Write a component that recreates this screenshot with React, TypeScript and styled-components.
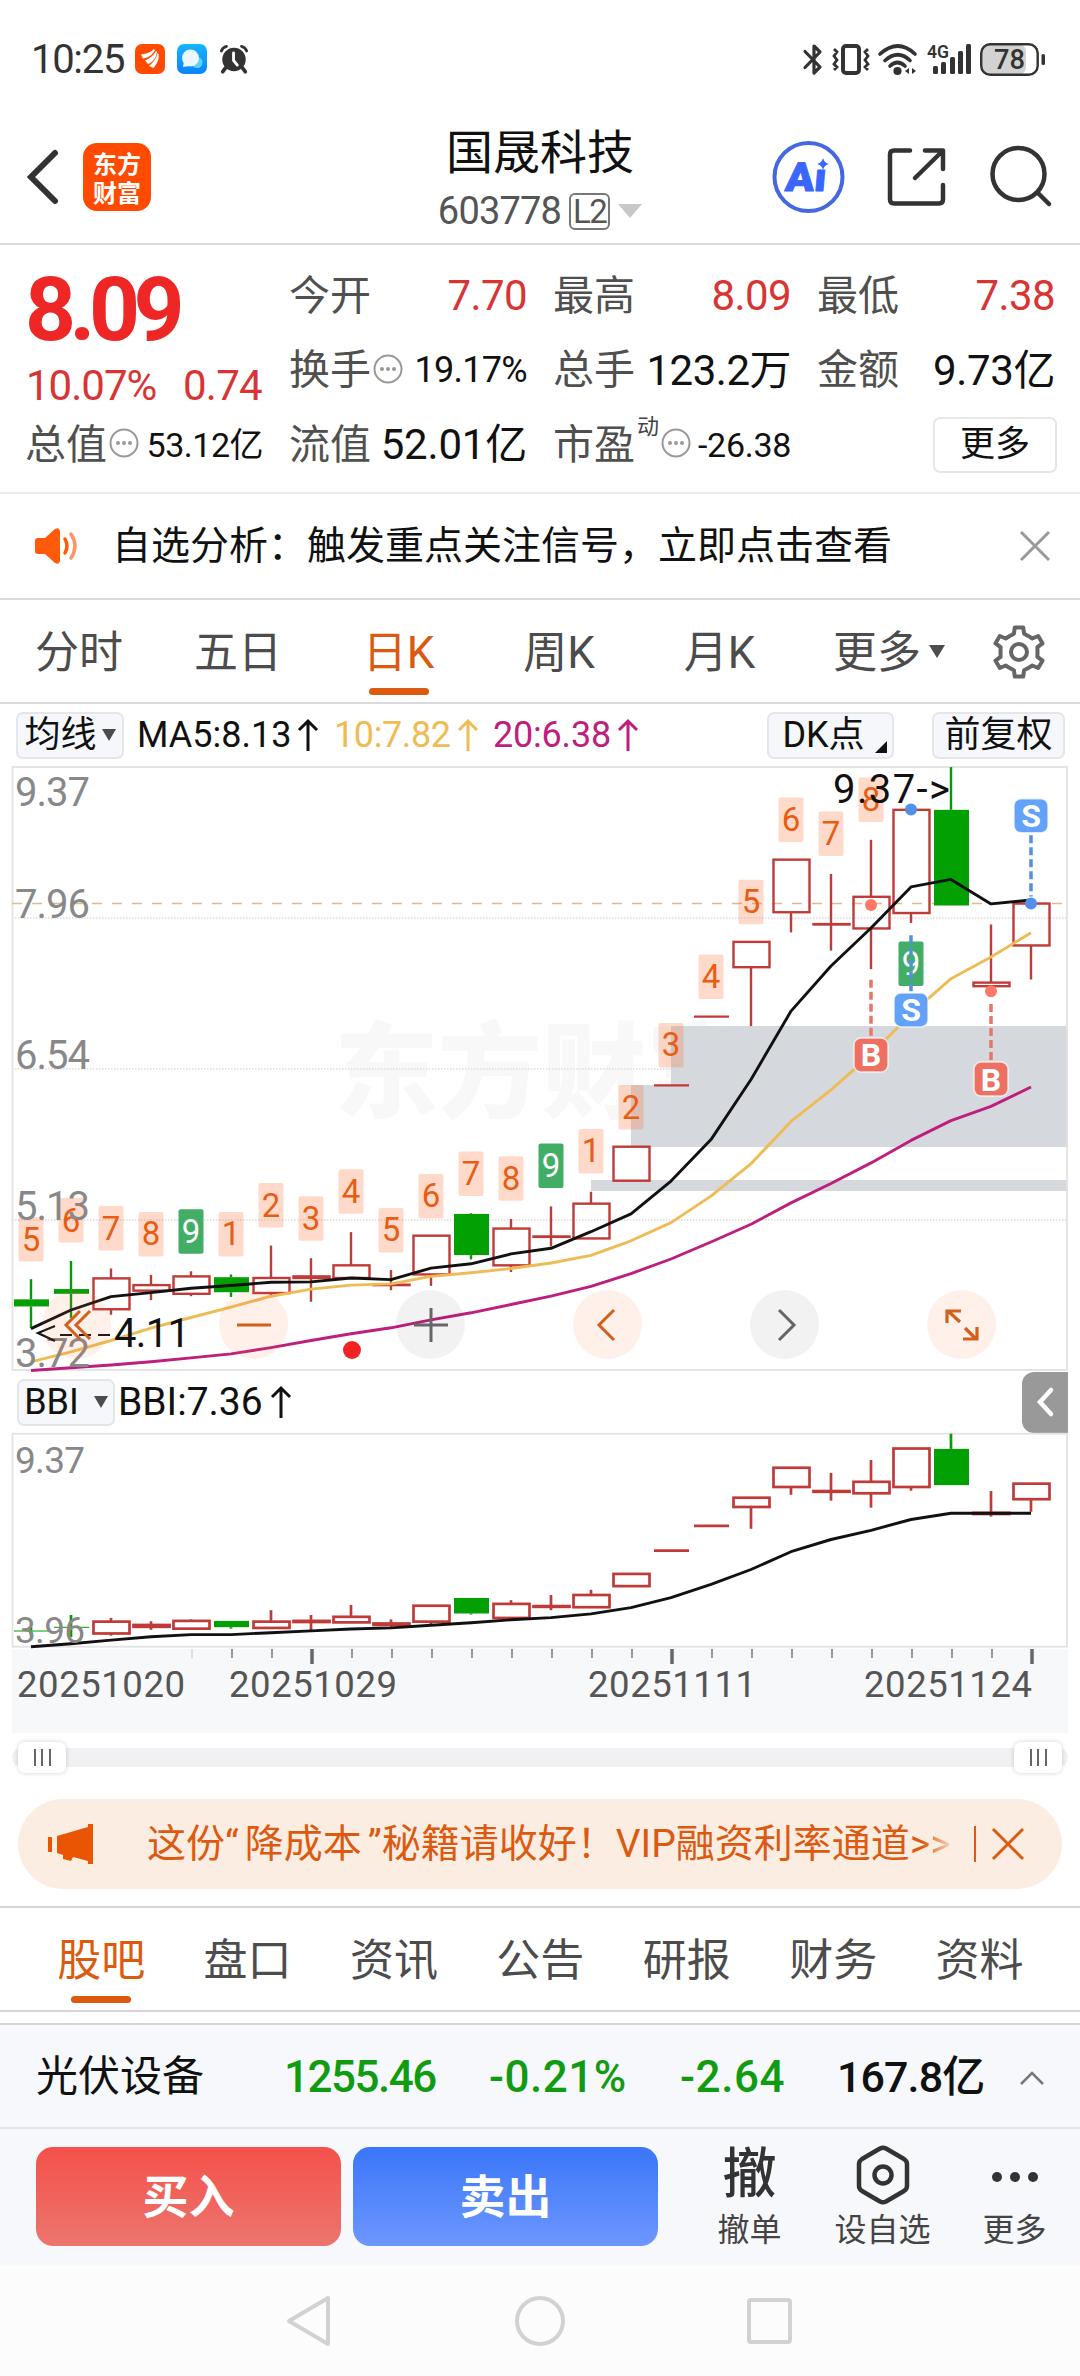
import React from "react";
import styled, { createGlobalStyle } from "styled-components";

const FONT = `Roboto, "Noto Sans CJK SC", sans-serif`;
const ORANGE = "#dc5a10";
const RED = "#d93434";
const GREEN = "#119b11";

const Global = createGlobalStyle`
  *, *::before, *::after { box-sizing: border-box; }
  body { margin: 0; background: #fff; }
  button { font: inherit; color: inherit; border: 0; padding: 0; background: none; letter-spacing: inherit; }
`;

const Screen = styled.main`
  width: 1080px;
  height: 2376px;
  display: flex;
  flex-direction: column;
  overflow: hidden;
  background: #fff;
  color: #111;
  font-family: ${FONT};
  white-space: nowrap;
  svg { display: block; flex: none; overflow: visible; }
`;

const Text = styled.span<{ $size: number; $color?: string; $weight?: number; $ls?: number; $w?: number; $shift?: number }>`
  display: inline-block;
  font-size: ${(p) => p.$size}px;
  line-height: 1.2;
  color: ${(p) => p.$color || "inherit"};
  font-weight: ${(p) => p.$weight || 400};
  letter-spacing: ${(p) => p.$ls || 0}px;
  ${(p) => (p.$w ? `width: ${p.$w}px;` : "")}
  ${(p) => (p.$shift ? `margin-top: ${p.$shift}px;` : "")}
`;

/* ---------- status bar ---------- */

const StatusBar = styled.header`
  height: 118px;
  flex: none;
  display: flex;
  align-items: center;
  justify-content: space-between;
  padding: 0 34px 0 31px;
`;
const StatusGroup = styled.div<{ $gap: number }>`
  display: flex;
  align-items: center;
  gap: ${(p) => p.$gap}px;
`;

const Status = () => (
  <StatusBar>
    <StatusGroup $gap={12}>
      <Text $size={40} $weight={450} $color="#333" $ls={-1.3} $w={92} $shift={2}>10:25</Text>
      <svg width="30" height="30" viewBox="0 0 30 30">
        <rect width="30" height="30" rx="7" fill="#ff4a00" />
        <g fill="#fff">
          <path d="M6 10.5C12 10 16 8 19 5l1 1.5C17 11 13 14 8 14.500z" />
          <path d="M10 16.500C15 14.500 19 11 21 7l1 1c-1 6-4 10-9 12z" />
          <path d="M14 22C19 18 22 13 22.500 9l1 1c1 5-1 9-5 14z" />
        </g>
      </svg>
      <svg width="30" height="30" viewBox="0 0 30 30">
        <defs>
          <linearGradient id="chatBg" x1="0" y1="0" x2="0" y2="1">
            <stop offset="0" stopColor="#16b4ff" />
            <stop offset="1" stopColor="#0a84ff" />
          </linearGradient>
        </defs>
        <rect width="30" height="30" rx="7" fill="url(#chatBg)" />
        <circle cx="20" cy="18.500" r="5.500" fill="#5cd2ff" />
        <circle cx="13.500" cy="14" r="8.500" fill="#eaf7ff" />
        <path d="M7 17l-1 6 7-1z" fill="#eaf7ff" />
      </svg>
      <svg width="30" height="30" viewBox="0 0 32 31" fill="none" stroke="#333" strokeLinecap="round">
        <circle cx="16" cy="16" r="12.500" fill="#333" stroke="none" />
        <path d="M2.500 7Q4 3 8 2M29.500 7Q28 3 24 2" strokeWidth="3" />
        <path d="M7 25l-3 4M25 25l3 4" strokeWidth="4" />
        <path d="M15.500 9v8l4 5" stroke="#fff" strokeWidth="3" />
      </svg>
    </StatusGroup>
    <StatusGroup $gap={8.5}>
      <svg width="20" height="31" viewBox="0 0 20 31" fill="none" stroke="#333" strokeWidth="3.200" strokeLinejoin="round" strokeLinecap="round">
        <path d="M2 7.500 17 23l-6 6V2l6 6L2 23.500" />
      </svg>
      <svg width="38" height="31" viewBox="0 0 38 31" fill="none" stroke="#333">
        <rect x="11" y="2" width="16" height="27" rx="3" strokeWidth="4" />
        <path d="M2 5l3 3-3 4 3 4-3 4 3 3-3 3M36 5l-3 3 3 4-3 4 3 4-3 3 3 3" strokeWidth="2.800" />
      </svg>
      <svg width="40" height="31" viewBox="0 0 40 31" fill="none" stroke="#333" strokeWidth="3.600" strokeLinecap="round">
        <path d="M2 10Q20-6 37 10M7 16.500Q20 5 32 16.500M12 22Q19.500 15 27 22" />
        <circle cx="19.500" cy="27" r="2.300" fill="#333" />
        <path d="M31 24v6l-4-3zM34 24v6l4-3z" fill="#333" stroke="none" />
      </svg>
      <svg width="45" height="32" viewBox="0 0 45 32">
        <text x="0" y="15" fontSize="19" fontWeight="600" fontFamily="Roboto, sans-serif" fill="#333" textLength="22" lengthAdjust="spacingAndGlyphs">4G</text>
        <g fill="#333">
          <rect x="6" y="23" width="5" height="8" rx="1.500" />
          <rect x="14" y="19" width="5" height="12" rx="1.500" />
          <rect x="23" y="14" width="5" height="17" rx="1.500" />
          <rect x="31" y="8" width="5" height="23" rx="1.500" />
          <rect x="39" y="1" width="5" height="30" rx="1.500" />
        </g>
      </svg>
      <svg width="66" height="33" viewBox="0 0 66 33">
        <rect x="1" y="1" width="45" height="31" rx="8" fill="#d2d2d2" />
        <rect x="1.200" y="1.200" width="56.500" height="30.500" rx="9" fill="none" stroke="#333" strokeWidth="2.400" />
        <rect x="61.500" y="11" width="3.500" height="11" rx="1.500" fill="#333" />
        <text x="14" y="26" fontSize="28" fontWeight="500" fontFamily="Roboto, sans-serif" fill="#333" textLength="31" lengthAdjust="spacingAndGlyphs">78</text>
      </svg>
    </StatusGroup>
  </StatusBar>
);

/* ---------- title bar ---------- */

const TitleBar = styled.div`
  height: 127px;
  flex: none;
  display: grid;
  grid-template-columns: 340px 400px 340px;
  border-bottom: 2px solid #d9d9d9;
`;
const TitleLeft = styled.div`
  display: flex;
  align-items: center;
  padding: 0 0 7px 26px;
  gap: 24px;
`;
const Logo = styled.div`
  width: 68px;
  height: 68px;
  border-radius: 14px;
  background: #ff4a00;
  color: #fff;
  display: flex;
  align-items: center;
  justify-content: center;
  text-align: center;
  white-space: pre-line;
  font: 700 24px/29px "Noto Sans CJK SC", sans-serif;
`;
const TitleMid = styled.div`
  display: flex;
  flex-direction: column;
  align-items: center;
  padding: 7px 0 0 0;
`;
const CodeRow = styled.div`
  display: flex;
  align-items: center;
  margin-top: 7px;
  gap: 8px;
  height: 46px;
`;
const LevelTag = styled.span`
  width: 41px;
  height: 37px;
  border: 2px solid #777;
  border-radius: 6px;
  font-size: 33px;
  line-height: 34px;
  text-align: center;
  letter-spacing: -1.5px;
  color: #555;
`;
const TitleRight = styled.div`
  display: flex;
  align-items: center;
  padding: 0 0 8px 22px;
`;

const Title = () => (
  <TitleBar>
    <TitleLeft>
      <svg width="33" height="56" viewBox="0 0 33 56" fill="none" stroke="#333" strokeWidth="6" strokeLinecap="round">
        <path d="M29 4 5 28l24 24" />
      </svg>
      <Logo>{"东方\n财富"}</Logo>
    </TitleLeft>
    <TitleMid>
      <Text $size={47}>国晟科技</Text>
      <CodeRow>
        <Text $size={38} $color="#555" $ls={-0.8}>603778</Text>
        <LevelTag>L2</LevelTag>
        <svg width="24" height="16" viewBox="0 0 24 16"><path d="M0 1h24L12 15z" fill="#c8c8c8" /></svg>
      </CodeRow>
    </TitleMid>
    <TitleRight>
      <svg width="308" height="76" viewBox="0 0 308 76" fill="none" strokeLinecap="round" strokeLinejoin="round">
        <circle cx="46.500" cy="38" r="34" stroke="#4468e0" strokeWidth="4" />
        <g transform="translate(4 0) skewX(-5)">
          <text x="23" y="52" fontSize="40" fontWeight="900" fontFamily="Roboto, sans-serif" fill="#3866ff" stroke="#3866ff" strokeWidth="1" textLength="41" lengthAdjust="spacingAndGlyphs">Aı</text>
        </g>
        <path d="M61 19q1.200 4.800 6 6-4.800 1.200-6 6-1.200-4.800-6-6 4.800-1.200 6-6z" fill="#3866ff" />
        <g stroke="#333" strokeWidth="4.500">
          <path d="M148 11.500h-16q-4 0-4 4v45q0 4 4 4h45q4 0 4-4V46" />
          <path d="M163 11.500h18V30M180 12.500 153 39" />
          <circle cx="256.500" cy="35" r="26" />
          <path d="M276 54l11 11" />
        </g>
      </svg>
    </TitleRight>
  </TitleBar>
);

/* ---------- quote ---------- */

const Quote = styled.section`
  height: 249px;
  flex: none;
  display: grid;
  grid-template-columns: repeat(4, 238px);
  grid-template-rows: repeat(3, 74.5px);
  justify-content: space-between;
  padding: 14px 25px 0 25px;
  border-bottom: 2px solid #ececec;
`;
const Headline = styled.div`
  grid-row: 1 / 3;
  display: flex;
  flex-direction: column;
`;
const ChangeRow = styled.div`
  display: flex;
  justify-content: space-between;
  margin-top: -3px;
  padding: 0 1px;
`;
const Cell = styled.div`
  display: flex;
  align-items: center;
  justify-content: space-between;
`;
const LabelGroup = styled.div`
  display: flex;
  align-items: center;
  gap: 2px;
`;
const Sup = styled.sup`
  font-size: 22px;
  line-height: 22px;
  color: #444;
  align-self: flex-start;
  margin-top: -5px;
`;
const MoreCell = styled.div`
  display: flex;
  justify-content: flex-end;
  align-items: center;
  margin-right: -2px;
`;
const MoreButton = styled.button`
  width: 124px;
  height: 56px;
  border: 2px solid #e6e6e8;
  border-radius: 7px;
  font-size: 35px;
  line-height: 48px;
`;

const Dots = () => (
  <svg width="30" height="30" viewBox="0 0 30 30" fill="#999">
    <circle cx="15" cy="13" r="13.500" fill="none" stroke="#999" strokeWidth="2" />
    <circle cx="9" cy="13" r="2" /><circle cx="15" cy="13" r="2" /><circle cx="21" cy="13" r="2" />
  </svg>
);

type QuoteItem = { label: string; value: string; color?: string; size?: number; ls?: number; info?: boolean; sup?: string };
const QUOTES: QuoteItem[] = [
  { label: "今开", value: "7.70", color: RED },
  { label: "最高", value: "8.09", color: RED },
  { label: "最低", value: "7.38", color: RED },
  { label: "换手", value: "19.17%", size: 36, info: true, ls: -0.7 },
  { label: "总手", value: "123.2万", ls: -0.5 },
  { label: "金额", value: "9.73亿", ls: -0.4 },
  { label: "总值", value: "53.12亿", size: 34, info: true, ls: -0.5 },
  { label: "流值", value: "52.01亿", ls: -0.2 },
  { label: "市盈", value: "-26.38", size: 34, info: true, sup: "动", ls: -0.3 },
];

const QuotePanel = () => (
  <Quote>
    <Headline>
      <Text $size={89} $weight={700} $color="#ee2626" $ls={-6.5} $shift={-2}>8.09</Text>
      <ChangeRow>
        <Text $size={42} $color={RED} $ls={-1}>10.07%</Text>
        <Text $size={42} $color={RED} $ls={-0.7}>0.74</Text>
      </ChangeRow>
    </Headline>
    {QUOTES.map((q) => (
      <Cell key={q.label}>
        <LabelGroup>
          <Text $size={41} $color="#505050">{q.label}</Text>
          {q.sup && <Sup>{q.sup}</Sup>}
          {q.info && <Dots />}
        </LabelGroup>
        <Text $size={q.size || 42} $color={q.color} $ls={q.ls || -0.6}>{q.value}</Text>
      </Cell>
    ))}
    <MoreCell><MoreButton>更多</MoreButton></MoreCell>
  </Quote>
);

/* ---------- notice ---------- */

const Notice = styled.section`
  height: 106px;
  flex: none;
  display: flex;
  align-items: center;
  padding: 0 29px 0 33px;
  border-bottom: 2px solid #d9d9d9;
`;
const NoticeText = styled.p`
  margin: 0 0 0 34px;
  flex: 1;
  font-size: 39px;
  line-height: 1.2;
`;

const NoticeRow = () => (
  <Notice>
    <svg width="45" height="40" viewBox="0 0 45 40" fill="none" stroke="#ff5a0a" strokeWidth="3.500" strokeLinecap="round">
      <path d="M5 12h7L22 3q4-2 5 2v30q-1 4-5 2l-10-9H5q-3 0-3-3V15q0-3 3-3z" fill="#ff5a0a" stroke="none" />
      <path d="M32 13q4 7 0 14" />
      <path d="M38 8q8 12 0 24" stroke="#f99664" />
    </svg>
    <NoticeText>自选分析：触发重点关注信号，立即点击查看</NoticeText>
    <svg width="32" height="32" viewBox="0 0 32 32" stroke="#999" strokeWidth="3"><path d="M2 2l28 28M30 2 2 30" /></svg>
  </Notice>
);

/* ---------- period tabs ---------- */

const Periods = styled.nav`
  height: 104px;
  flex: none;
  display: flex;
  align-items: flex-start;
  padding: 0 34px 0 0;
  border-bottom: 2px solid #d9d9d9;
`;
const Tab = styled.button<{ $active?: boolean; $w?: number }>`
  height: 98px;
  ${(p) => (p.$w ? `width: ${p.$w}px;` : "")}
  display: flex;
  flex-direction: column;
  align-items: center;
  padding-top: 28px;
  font-size: 44px;
  line-height: 50px;
  white-space: nowrap;
  color: ${(p) => (p.$active ? ORANGE : "#4c4c4c")};
  &::after {
    content: "";
    width: 60px;
    height: 7px;
    margin-top: 10px;
    border-radius: 4px;
    background: ${(p) => (p.$active ? ORANGE : "transparent")};
  }
`;
const MoreTab = styled.div`
  flex: 1;
  display: flex;
  align-items: flex-start;
  gap: 8px;
  padding-left: 33px;
  svg { margin-top: 45px; }
`;
const GearBox = styled.div`
  padding-top: 25px;
`;

const gearPath = (() => {
  const pts: string[] = [];
  for (let i = 0; i < 6; i++) {
    const base = (i * 60 - 90) * (Math.PI / 180);
    ([[-0.27, 19], [-0.17, 25], [0.17, 25], [0.27, 19], [0.52, 18.5]] as const).forEach(([a, r]) => {
      pts.push(`${(27 + r * Math.cos(base + a)).toFixed(1)} ${(27 + r * Math.sin(base + a)).toFixed(1)}`);
    });
  }
  return `M${pts.join("L")}Z`;
})();

const PeriodTabs = () => (
  <Periods>
    <Tab $w={158}>分时</Tab>
    <Tab $w={160}>五日</Tab>
    <Tab $w={161} $active>日K</Tab>
    <Tab $w={160}>周K</Tab>
    <Tab $w={161}>月K</Tab>
    <MoreTab>
      <Tab>更多</Tab>
      <svg width="16" height="13" viewBox="0 0 16 13"><path d="M0 0h16L8 13z" fill="#4c4c4c" /></svg>
    </MoreTab>
    <GearBox>
      <svg width="54" height="54" viewBox="0 0 54 54" fill="none" stroke="#666" strokeWidth="4" strokeLinejoin="round">
        <path d={gearPath} />
        <circle cx="27" cy="27" r="8" />
      </svg>
    </GearBox>
  </Periods>
);

/* ---------- indicator rows ---------- */

const IndicatorRow = styled.div<{ $h: number; $pad: string }>`
  height: ${(p) => p.$h}px;
  flex: none;
  display: flex;
  align-items: center;
  padding: ${(p) => p.$pad};
`;
const Chip = styled.button<{ $w: number; $size?: number; $ml?: number; $gap?: number }>`
  width: ${(p) => p.$w}px;
  height: 47px;
  margin-left: ${(p) => p.$ml || 0}px;
  border: 2px solid #e4e6ea;
  border-radius: 7px;
  background: #f6f7fb;
  display: flex;
  align-items: center;
  justify-content: center;
  gap: ${(p) => p.$gap || 5}px;
  font-size: ${(p) => p.$size || 36}px;
  line-height: 42px;
`;
const Corner = styled.i`
  align-self: flex-end;
  margin: 0 -8px 4px 5px;
  border-bottom: 12px solid #111;
  border-left: 12px solid transparent;
`;
const MaText = styled.span<{ $c: string; $w: number; $size?: number; $ls?: number; $ml?: number }>`
  display: flex;
  align-items: center;
  gap: 7px;
  width: ${(p) => p.$w}px;
  margin-left: ${(p) => p.$ml || 0}px;
  color: ${(p) => p.$c};
  font-size: ${(p) => p.$size || 36}px;
  line-height: 44px;
  letter-spacing: ${(p) => p.$ls || 0}px;
`;
const Spacer = styled.span`
  flex: 1;
`;

const Up = ({ h = 32 }: { h?: number }) => (
  <svg width="20" height={h} viewBox="0 0 20 32" fill="none" stroke="currentColor" strokeWidth="3"><path d="M10 32V2M1 11l9-9 9 9" /></svg>
);
const Tri = () => <svg width="14" height="12" viewBox="0 0 14 12"><path d="M0 0h14L7 12z" fill="#4c4c4c" /></svg>;

/* ---------- charts ---------- */

const ChartBox = styled.div<{ $h: number }>`
  position: relative;
  height: ${(p) => p.$h}px;
  flex: none;
`;
const Controls = styled.div`
  position: absolute;
  left: 42px;
  right: 84px;
  top: 530px;
  display: flex;
  justify-content: space-between;
`;
const RoundButton = styled.button<{ $muted?: boolean }>`
  width: 69px;
  height: 69px;
  border-radius: 50%;
  display: flex;
  align-items: center;
  justify-content: center;
  background: ${(p) => (p.$muted ? "rgba(0,0,0,.05)" : "rgba(255,110,40,.1)")};
  color: ${(p) => (p.$muted ? "#666" : "#d2601c")};
`;

type Kind = "r" | "g";
// [kind, high, body top, body bottom, low] in plot units
type Candle = [Kind, number, number, number, number];

const cx = (i: number) => 31 + 40 * i;

const PRICE: Candle[] = [
  ["g", 1313, 1364, 1382, 1437], ["g", 1267, 1338, 1350, 1411], ["r", 1286, 1311, 1389, 1403],
  ["r", 1302, 1328, 1342, 1366], ["r", 1293, 1306, 1350, 1356], ["g", 1301, 1308, 1346, 1358],
  ["r", 1228, 1310, 1348, 1356], ["r", 1260, 1306, 1310, 1370], ["r", 1194, 1278, 1310, 1310],
  ["r", 1290, 1327, 1328, 1341], ["r", 1203, 1203, 1301, 1330], ["g", 1146, 1148, 1252, 1263],
  ["r", 1161, 1185, 1278, 1295], ["r", 1129, 1205, 1206, 1230], ["r", 1092, 1122, 1210, 1210],
  ["r", 978, 978, 1064, 1064], ["r", 823, 823, 823, 823], ["r", 649, 649, 649, 649],
  ["r", 460, 460, 524, 673], ["r", 252, 252, 385, 436], ["r", 288, 415, 416, 482],
  ["r", 202, 346, 426, 529], ["r", 126, 126, 387, 412], ["g", 18, 126, 368, 368],
  ["r", 416, 563, 572, 585], ["r", 363, 363, 469, 555],
];
const MA5 = [1438, 1391, 1357, 1347, 1336, 1329, 1321, 1320, 1310, 1314, 1285, 1274, 1249, 1235, 1193, 1148, 1065, 960, 808, 635, 521, 425, 321, 302, 364, 354];
const MA10 = [1522, 1497, 1468, 1437, 1410, 1384, 1356, 1338, 1328, 1325, 1306, 1297, 1286, 1272, 1253, 1216, 1170, 1103, 1021, 914, 834, 745, 642, 553, 498, 437];
const MA20 = [1544, 1537, 1530, 1522, 1512, 1502, 1486, 1468, 1451, 1436, 1416, 1398, 1377, 1356, 1331, 1299, 1262, 1219, 1174, 1120, 1071, 1019, 962, 912, 876, 827];

const TAGS: [number, number][] = [
  [5, 1156], [6, 1108], [7, 1128], [8, 1143], [9, 1136], [1, 1143], [2, 1070], [3, 1103], [4, 1035], [5, 1133],
  [6, 1047], [7, 990], [8, 1002], [9, 970], [1, 933], [2, 822], [3, 665], [4, 492], [5, 303], [6, 95],
  [7, 130], [8, 44], [9, 459],
];

const SUB: Candle[] = [
  ["g", 1262, 1272, 1274, 1286], ["g", 1230, 1262, 1264, 1290], ["r", 1238, 1248, 1280, 1286],
  ["r", 1247, 1257, 1262, 1270], ["r", 1242, 1246, 1267, 1270], ["g", 1246, 1246, 1263, 1267],
  ["r", 1217, 1248, 1265, 1267], ["r", 1230, 1246, 1249, 1272], ["r", 1203, 1235, 1250, 1250],
  ["r", 1242, 1253, 1257, 1262], ["r", 1205, 1205, 1248, 1257], ["g", 1184, 1184, 1226, 1229],
  ["r", 1190, 1200, 1238, 1243], ["r", 1176, 1206, 1208, 1217], ["r", 1162, 1176, 1209, 1209],
  ["r", 1119, 1119, 1152, 1152], ["r", 1056, 1056, 1056, 1056], ["r", 989, 989, 989, 989],
  ["r", 913, 913, 938, 997], ["r", 832, 832, 884, 905], ["r", 846, 895, 897, 921],
  ["r", 811, 870, 901, 940], ["r", 780, 780, 884, 894], ["g", 740, 781, 879, 879],
  ["r", 895, 954, 957, 964], ["r", 875, 875, 917, 951],
];
const BBI = [1316, 1308, 1298, 1289, 1283, 1283, 1278, 1273, 1268, 1265, 1258, 1251, 1243, 1237, 1227, 1210, 1183, 1147, 1107, 1059, 1026, 1001, 972, 955, 955, 955];

const yMain = (u: number) => u * 0.39541;
const ySub = (u: number) => u * 0.3699 - 272;

const Candles = ({ data, y, width }: { data: Candle[]; y: (u: number) => number; width: number }) => (
  <>
    {data.map(([k, h, t, b, l], i) => {
      const x = cx(i);
      const c = k === "g" ? "#049c04" : "#c03a38";
      const flat = t === b;
      return (
        <g key={i} stroke={c} strokeWidth={width}>
          {h < t && <line x1={x} x2={x} y1={y(h)} y2={y(t)} />}
          {l > b && <line x1={x} x2={x} y1={y(b)} y2={y(l)} />}
          {flat && <line x1={x - 17} x2={x + 18} y1={y(t)} y2={y(t)} />}
          {!flat && k === "g" && <rect x={x - 17} y={y(t)} width="35" height={Math.max(1, y(b) - y(t))} fill="#02a002" stroke="none" />}
          {!flat && k === "r" && <rect x={x - 17.5} y={y(t)} width="36" height={y(b) - y(t)} fill="none" />}
        </g>
      );
    })}
  </>
);

const Curve = ({ data, y, color }: { data: number[]; y: (u: number) => number; color: string }) => (
  <polyline points={data.map((v, i) => `${cx(i)},${y(v).toFixed(1)}`).join(" ")} fill="none" stroke={color} strokeWidth="2.900" strokeLinejoin="round" />
);

const AxisText = ({ y, size, w, children }: { y: number; size: number; w: number; children: string }) => (
  <text x="15" y={y} fontSize={size} fill="#888" textLength={w}>{children}</text>
);

const Signal = ({ i, u, letter }: { i: number; u: number; letter: "B" | "S" }) => (
  <g>
    <rect x={cx(i) - 17} y={yMain(u) - 17} width="34" height="34" rx="7" fill={letter === "B" ? "#ee6c5c" : "#5b9df9"} fillOpacity=".95" stroke="#fff" strokeOpacity=".7" strokeWidth="1.500" />
    <text x={cx(i)} y={yMain(u) + 11.5} fontSize="32" fontWeight="700" fill="#fff" textAnchor="middle">{letter}</text>
  </g>
);
const Link = ({ i, from, to, color }: { i: number; from: number; to: number; color: string }) => (
  <line x1={cx(i)} x2={cx(i)} y1={yMain(from)} y2={yMain(to)} stroke={color} strokeWidth="3.500" strokeDasharray="8 4" />
);

const MainChart = () => (
  <ChartBox $h={612}>
    <svg width="1080" height="612" viewBox="0 0 1080 612" fontFamily={FONT}>
      <text x="334" y="350" fontSize="104" fontWeight="900" fill="#f8f8f8" textLength="416" fontFamily="'Noto Sans CJK SC', sans-serif">东方财富</text>
      <g stroke="#dcdcdc" strokeWidth="1.500" strokeDasharray="1.500 1.500">
        {[158, 309, 460].map((y) => <line key={y} x1="12" x2="1067" y1={y} y2={y} />)}
      </g>
      <path d={`M671 ${yMain(673)}H1067V${yMain(979)}H631V${yMain(822)}H671zM591 ${yMain(1062)}H1067V${yMain(1090)}H591z`} fill="#d5d8dd" />
      <rect x="12.500" y="7" width="1054.500" height="603" fill="none" stroke="#e2e2e2" strokeWidth="1.800" />
      <line x1="12" x2="1067" y1="143.500" y2="143.500" stroke="#dcbb8e" strokeWidth="1.500" strokeDasharray="10 10" />
      <Candles data={PRICE} y={yMain} width={2.4} />
      {TAGS.map(([n, u], i) => (
        <g key={i}>
          <rect x={cx(i) - 12.500} y={yMain(u)} width="25" height="44.500" rx="2" fill={n === 9 ? "#42ae65" : "#ff6a2b"} fillOpacity={n === 9 ? 1 : 0.25} />
          <text x={cx(i)} y={yMain(u) + 33.5} fontSize="33" textAnchor="middle" fill={n === 9 ? "#fff" : "#e85d14"}>{n}</text>
        </g>
      ))}
      <Curve data={MA20} y={yMain} color="#be1e7d" />
      <Curve data={MA10} y={yMain} color="#efbb55" />
      <Curve data={MA5} y={yMain} color="#111" />
      <circle cx={cx(21)} cy={yMain(367)} r="6" fill="#ff7868" />
      <circle cx={cx(24)} cy={yMain(585)} r="6" fill="#ff7868" />
      <circle cx={cx(22)} cy={yMain(125)} r="6" fill="#528fe8" />
      <circle cx={cx(25)} cy={yMain(363)} r="6" fill="#528fe8" />
      <Link i={21} from={556} to={703} color="#ea7565" />
      <Link i={24} from={617} to={762} color="#ea7565" />
      <Link i={22} from={443} to={590} color="#528fe8" />
      <Link i={25} from={190} to={345} color="#528fe8" />
      <Signal i={21} u={746} letter="B" />
      <Signal i={24} u={807} letter="B" />
      <Signal i={22} u={632} letter="S" />
      <Signal i={25} u={141} letter="S" />
      <circle cx="352" cy="590" r="9" fill="#ee2323" />
      <AxisText y={45.500} size={40} w={75}>9.37</AxisText>
      <AxisText y={158} size={40} w={75}>7.96</AxisText>
      <AxisText y={308.500} size={40} w={75}>6.54</AxisText>
      <AxisText y={459.500} size={40} w={75}>5.13</AxisText>
      <AxisText y={607} size={40} w={75}>3.72</AxisText>
      <text x="833" y="42.500" fontSize="40" fill="#111" textLength="117">9.37-&gt;</text>
      <text x="114" y="587" fontSize="40" fill="#111" textLength="76">4.11</text>
      <path d="M55 566l-17 7 17 8" fill="none" stroke="#111" strokeWidth="2.200" />
      <path d="M60 575h53" stroke="#111" strokeWidth="2.200" strokeDasharray="12 7" />
    </svg>
    <Controls>
      <RoundButton>
        <svg width="30" height="32" viewBox="0 0 30 32" fill="none" stroke="currentColor" strokeWidth="3"><path d="M18 2 4 16l14 14M28 2 14 16l14 14" /></svg>
      </RoundButton>
      <RoundButton>
        <svg width="34" height="34" viewBox="0 0 34 34" stroke="currentColor" strokeWidth="3"><path d="M0 17h34" /></svg>
      </RoundButton>
      <RoundButton $muted>
        <svg width="34" height="34" viewBox="0 0 34 34" stroke="currentColor" strokeWidth="3"><path d="M0 17h34M17 0v34" /></svg>
      </RoundButton>
      <RoundButton>
        <svg width="22" height="32" viewBox="0 0 22 32" fill="none" stroke="currentColor" strokeWidth="3"><path d="M17 1 2 16l15 15" /></svg>
      </RoundButton>
      <RoundButton $muted>
        <svg width="22" height="32" viewBox="0 0 22 32" fill="none" stroke="currentColor" strokeWidth="3"><path d="M5 1l15 15L5 31" /></svg>
      </RoundButton>
      <RoundButton>
        <svg width="34" height="34" viewBox="0 0 34 34" fill="none" stroke="currentColor" strokeWidth="3.200"><path d="M2 15V3h14M3 3l12 11M32 19v12H18M31 31 20 20" /></svg>
      </RoundButton>
    </Controls>
  </ChartBox>
);

const CollapseTab = styled.button`
  width: 46px;
  height: 61px;
  border-radius: 12px 0 0 12px;
  background: #999;
  display: flex;
  align-items: center;
  justify-content: center;
`;

const SubChart = () => (
  <ChartBox $h={217}>
    <svg width="1080" height="217" viewBox="0 0 1080 217" fontFamily={FONT}>
      <rect x="12.500" y="1.700" width="1054.500" height="213" fill="none" stroke="#e2e2e2" strokeWidth="1.800" />
      <Candles data={SUB} y={ySub} width={2.7} />
      <Curve data={BBI} y={ySub} color="#111" />
      <AxisText y={40.500} size={37} w={70}>9.37</AxisText>
      <AxisText y={210.500} size={37} w={70}>3.96</AxisText>
    </svg>
  </ChartBox>
);

const Axis = styled.div`
  height: 84px;
  flex: none;
  margin: 0 12px;
  background: #f7f8fa;
`;
const DATES: [number, string][] = [[17, "20251020"], [229, "20251029"], [588, "20251111"], [864, "20251124"]];

const DateAxis = () => (
  <Axis>
    <svg width="1056" height="84" viewBox="12 0 1056 84" fontFamily={FONT}>
      {Array.from({ length: 22 }, (_, k) => k + 4).map((i) => {
        const major = i === 7 || i === 16 || i === 25;
        return (
          <line key={i} x1={cx(i) + 1} x2={cx(i) + 1} y1="0" y2={major ? 15 : 9} stroke={i === 4 ? "#ddd" : major ? "#666" : "#999"} strokeWidth={major ? 3.5 : 2} />
        );
      })}
      {DATES.map(([x, d]) => <text key={d} x={x} y="47.500" fontSize="36.500" fill="#555" textLength="168">{d}</text>)}
    </svg>
  </Axis>
);

/* ---------- range slider ---------- */

const RangeRow = styled.div`
  height: 66px;
  flex: none;
  display: flex;
  align-items: center;
  padding: 0 12px 18px;
`;
const Track = styled.div`
  height: 19px;
  flex: 1;
  padding: 0 6px;
  border-radius: 10px;
  background: #f1f1f3;
  display: flex;
  align-items: center;
  justify-content: space-between;
`;
const Handle = styled.div`
  width: 48px;
  height: 31px;
  border-radius: 7px;
  background: #fff;
  box-shadow: 0 0 5px rgba(0, 0, 0, 0.18);
  display: flex;
  align-items: center;
  justify-content: center;
  gap: 5.5px;
  i { width: 2px; height: 17px; background: #666; }
`;

/* ---------- promo ---------- */

const Promo = styled.section`
  height: 90px;
  flex: none;
  margin: 0 18px 17px;
  padding: 0 37px 0 29px;
  border-radius: 45px;
  background: #fcede3;
  color: ${ORANGE};
  display: flex;
  align-items: center;
`;
const PromoText = styled.p`
  margin: 0 0 0 53px;
  flex: 1;
  font-size: 39px;
  line-height: 1.2;
`;
const Quo = styled.span<{ $l?: number; $r?: number }>`
  margin: 0 ${(p) => p.$r || 0}px 0 ${(p) => p.$l || 0}px;
`;
const Fade = styled.span`
  background: linear-gradient(90deg, ${ORANGE} 30%, #f6d3be);
  -webkit-background-clip: text;
  background-clip: text;
  color: transparent;
`;
const Bar = styled.i`
  width: 2px;
  height: 36px;
  margin-right: 15px;
  background: ${ORANGE};
`;

/* ---------- section tabs ---------- */

const Sections = styled.nav`
  height: 106px;
  flex: none;
  display: grid;
  grid-template-columns: repeat(7, 146.4px);
  padding-left: 28px;
  border-top: 2px solid #d4d4d4;
  border-bottom: 2px solid #d4d4d4;
`;

/* ---------- bottom panel ---------- */

const Panel = styled.section`
  height: 242px;
  flex: none;
  margin-top: 11px;
  border-top: 2px solid #d4d4d4;
  background: #f6f8fb;
`;
const IndexRow = styled.div`
  height: 104px;
  display: grid;
  grid-template-columns: 248px 205px 191px 157px 183px 24px;
  align-items: center;
  padding: 3px 0 0 36px;
  border-bottom: 2px solid #e2e4e7;
`;
const Actions = styled.div`
  display: flex;
  padding: 18px 0 0 36px;
`;
const Trade = styled.button<{ $from: string; $to: string }>`
  width: 305px;
  height: 99px;
  margin-right: 12px;
  border-radius: 17px;
  background: linear-gradient(180deg, ${(p) => p.$from}, ${(p) => p.$to});
  color: #fff;
  font-size: 46px;
  font-weight: 700;
  line-height: 101px;
`;
const Tools = styled.div`
  flex: 1;
  display: grid;
  grid-template-columns: 133px 133px 1fr;
  margin: -7px 0 0 13px;
`;
const Tool = styled.button`
  display: flex;
  flex-direction: column;
  align-items: center;
  color: #444;
  font-size: 32px;
  line-height: 40px;
`;
const ToolIcon = styled.span`
  height: 70px;
  display: flex;
  align-items: center;
  font-size: 54px;
  font-weight: 500;
  line-height: 70px;
  color: #333;
`;
const SystemNav = styled.nav`
  flex: 1;
  display: flex;
  align-items: center;
  justify-content: center;
  background: #fcfcfc;
`;

export default function App() {
  return (
    <Screen>
      <Global />
      <Status />
      <Title />
      <QuotePanel />
      <NoticeRow />
      <PeriodTabs />
      <IndicatorRow $h={56} $pad="6px 15px 0 16px">
        <Chip $w={108}>均线<Tri /></Chip>
        <MaText $c="#111" $w={196}><Quo $l={13}>MA5:8.13</Quo><Up /></MaText>
        <MaText $c="#efbb55" $w={159} $ls={-0.4} $ml={14}>10:7.82<Up /></MaText>
        <MaText $c="#be1e7d" $w={160} $ls={-0.2}>20:6.38<Up /></MaText>
        <Spacer />
        <Chip $w={127}>DK点<Corner /></Chip>
        <Chip $w={133} $ml={38}>前复权</Chip>
      </IndicatorRow>
      <MainChart />
      <IndicatorRow $h={60} $pad="0 12px 0 17px">
        <Chip $w={98} $gap={15}>BBI<Tri /></Chip>
        <MaText $c="#111" $w={200} $size={39}><Quo $l={3} $r={1}>BBI:7.36</Quo><Up h={34} /></MaText>
        <Spacer />
        <CollapseTab>
          <svg width="18" height="30" viewBox="0 0 18 30" fill="none" stroke="#fff" strokeWidth="4.500" strokeLinecap="round"><path d="M15 3 4 15l11 12" /></svg>
        </CollapseTab>
      </IndicatorRow>
      <SubChart />
      <DateAxis />
      <RangeRow>
        <Track>
          <Handle><i /><i /><i /></Handle>
          <Handle><i /><i /><i /></Handle>
        </Track>
      </RangeRow>
      <Promo>
        <svg width="47" height="40" viewBox="0 0 47 40" fill="#ea5504"><path d="M1 13h4v15H1zM10 12 41 3V0h5v40h-5v-3l-15-4-2 4-8-2v-4l-6-2z" /></svg>
        <PromoText>
          这份<Quo $r={6}>“</Quo>降成本<Quo $l={6}>”</Quo>秘籍请收好！VIP融资利率通道<Fade>&gt;&gt;</Fade>
        </PromoText>
        <Bar />
        <svg width="34" height="34" viewBox="0 0 34 34" stroke={ORANGE} strokeWidth="3"><path d="M2 2l30 30M32 2 2 32" /></svg>
      </Promo>
      <Sections>
        {["股吧", "盘口", "资讯", "公告", "研报", "财务", "资料"].map((t, i) => <Tab key={t} $active={i === 0}>{t}</Tab>)}
      </Sections>
      <Panel>
        <IndexRow>
          <Text $size={42}>光伏设备</Text>
          <Text $size={44} $weight={500} $color={GREEN} $ls={-1.5}>1255.46</Text>
          <Text $size={44} $weight={500} $color={GREEN} $ls={0.5}>-0.21%</Text>
          <Text $size={44} $weight={500} $color={GREEN} $ls={0.6}>-2.64</Text>
          <Text $size={43} $weight={500} $ls={-0.9}>167.8亿</Text>
          <svg width="24" height="14" viewBox="0 0 24 14" fill="none" stroke="#777" strokeWidth="2.500"><path d="M1 13 12 2l11 11" /></svg>
        </IndexRow>
        <Actions>
          <Trade $from="#f4514a" $to="#ec756e">买入</Trade>
          <Trade $from="#3a76f8" $to="#6d97ff">卖出</Trade>
          <Tools>
            <Tool><ToolIcon>撤</ToolIcon>撤单</Tool>
            <Tool>
              <ToolIcon>
                <svg width="54" height="60" viewBox="0 0 54 60" fill="none" stroke="#333" strokeWidth="4.500" strokeLinejoin="round">
                  <path d="M24 3.500q3-1.500 6 0l18 10.500q3 2 3 5v22q0 3-3 5L30 56.500q-3 1.500-6 0L6 46q-3-2-3-5V19q0-3 3-5z" />
                  <circle cx="27" cy="30" r="8.500" />
                </svg>
              </ToolIcon>
              设自选
            </Tool>
            <Tool>
              <ToolIcon>
                <svg width="48" height="12" viewBox="0 0 48 12" fill="#333"><circle cx="6" cy="8" r="5" /><circle cx="24" cy="8" r="5" /><circle cx="42" cy="8" r="5" /></svg>
              </ToolIcon>
              更多
            </Tool>
          </Tools>
        </Actions>
      </Panel>
      <SystemNav>
        <svg width="510" height="56" viewBox="285 2292 510 56" fill="none" stroke="#d2d2d2" strokeWidth="4" strokeLinejoin="round">
          <path d="M328 2297v46l-39-23z" />
          <circle cx="540" cy="2320" r="23" />
          <rect x="749" y="2299" width="41" height="42" rx="2" />
        </svg>
      </SystemNav>
    </Screen>
  );
}
